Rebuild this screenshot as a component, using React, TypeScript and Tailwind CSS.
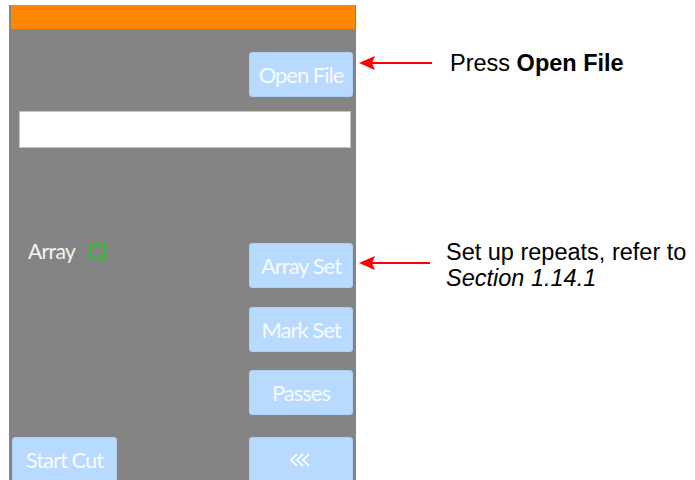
function PanelButton({ label }: { label: React.ReactNode }) {
  return (
    <div className="flex h-[45px] w-[104px] items-center justify-center rounded-[3px] border border-[#add0f7] bg-[#b9daff] font-['Lato',sans-serif] text-[22px] leading-none tracking-[-1px] text-[#f7faff]">
      {label}
    </div>
  );
}

function Chevrons() {
  return (
    <svg width="22" height="14" viewBox="0 0 22 14" fill="none" stroke="#f7faff" strokeWidth="1.8">
      <polyline points="7,1 1,7 7,13" />
      <polyline points="13,1 7,7 13,13" />
      <polyline points="19,1 13,7 19,13" />
    </svg>
  );
}

function Arrow({ width }: { width: number }) {
  return (
    <svg width={width} height="16" viewBox={`0 0 ${width} 16`} className="shrink-0">
      <line x1="12" y1="8" x2={width} y2="8" stroke="#ff0000" strokeWidth="2" />
      <polygon points="1,8 17,1 14,8 17,15" fill="#ff0000" />
    </svg>
  );
}

export default function App() {
  return (
    <div className="flex h-[480px] w-[695px] items-start overflow-hidden bg-white">
      {/* device panel */}
      <div className="ml-[9px] mt-[5px] flex h-[490px] w-[347px] shrink-0 flex-col bg-[#848484]">
        <div className="ml-[2px] mr-[1px] h-[24px] bg-[#ff8800]" />

        <div className="mt-[23px] flex justify-end pr-[3px]">
          <PanelButton label="Open File" />
        </div>

        <div className="ml-[10px] mr-[5px] mt-[14px] h-[37px] border border-[#c4c4c4] bg-white" />

        <div className="mt-[95px] flex items-start justify-between pl-[19px] pr-[3px]">
          <div className="flex items-start gap-[15px]">
            <span className="-mt-[2px] font-['Lato',sans-serif] text-[21px] leading-[20px] tracking-[-0.6px] text-[#f4f4f4]">
              Array
            </span>
            <span className="h-[16px] w-[16px] rounded-[3px] border-2 border-[#1ec81e]" />
          </div>
          <PanelButton label="Array Set" />
        </div>

        <div className="mt-[19px] flex justify-end pr-[3px]">
          <PanelButton label="Mark Set" />
        </div>

        <div className="mt-[18px] flex justify-end pr-[3px]">
          <PanelButton label="Passes" />
        </div>

        <div className="mt-[22px] flex items-start justify-between pl-[3px] pr-[3px]">
          <div className="flex h-[45px] w-[105px] items-center justify-center rounded-[3px] border border-[#add0f7] bg-[#b9daff] font-['Lato',sans-serif] text-[22px] leading-none tracking-[-1px] text-[#f7faff]">
            Start Cut
          </div>
          <PanelButton label={<Chevrons />} />
        </div>
      </div>

      {/* annotations */}
      <div className="ml-[2px] flex flex-col pt-[50px] font-['Liberation_Sans',Arial,sans-serif] text-[23.5px] leading-[26px] text-black">
        <div className="flex items-center gap-[18px]">
          <Arrow width={74} />
          <span>
            Press <b>Open File</b>
          </span>
        </div>

        <div className="mt-[163px] flex items-start gap-[16px]">
          <div className="mt-[16px]">
            <Arrow width={72} />
          </div>
          <div className="flex flex-col">
            <span className="whitespace-nowrap">Set up repeats, refer to</span>
            <span className="italic">Section 1.14.1</span>
          </div>
        </div>
      </div>
    </div>
  );
}
